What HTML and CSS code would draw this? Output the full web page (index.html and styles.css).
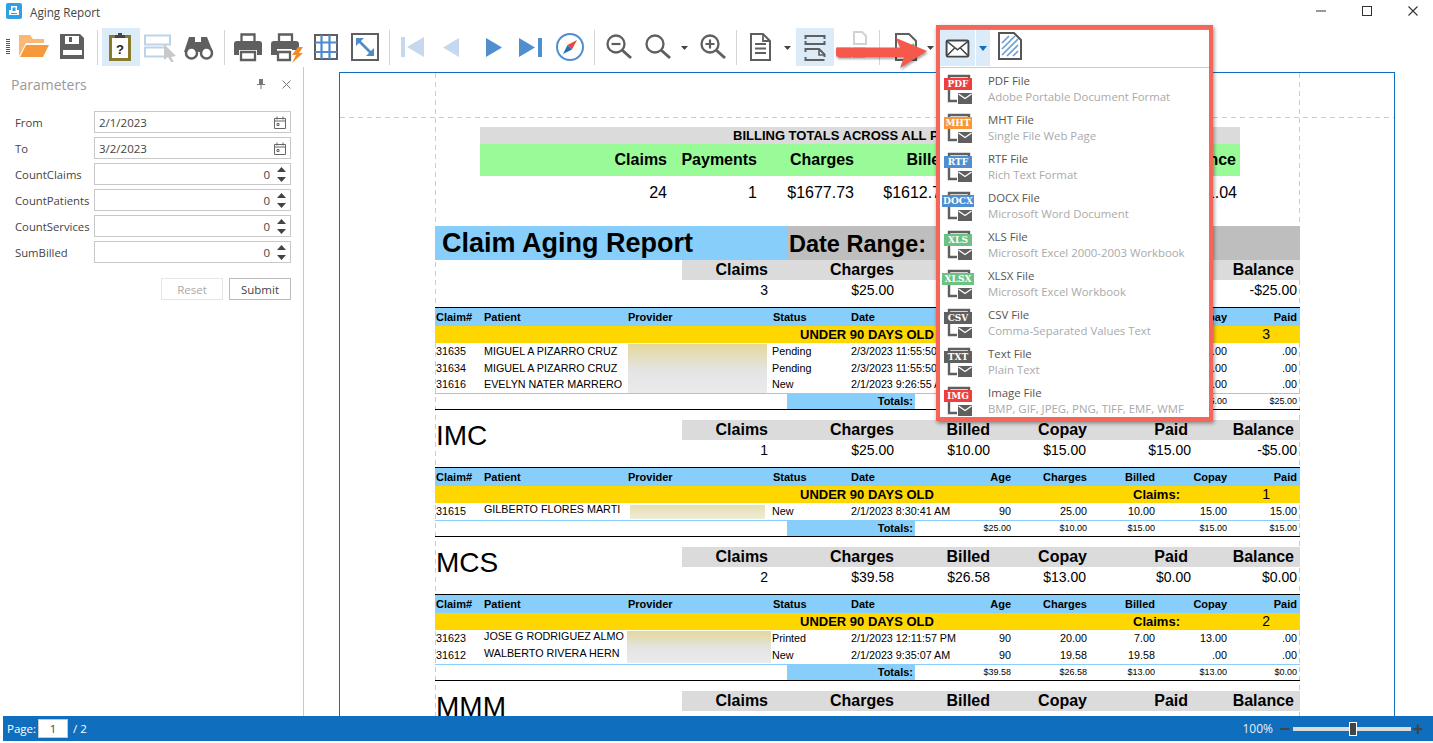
FILE: index.html
```html
<!DOCTYPE html>
<html lang="en">
<head>
<meta charset="utf-8">
<title>Aging Report</title>
<link rel="stylesheet" href="styles.css">
</head>
<body>
<svg class="defs" width="0" height="0" aria-hidden="true">
  <symbol id="filemail" viewBox="0 0 30 30">
    <path d="M5 6V2h20v5M5 14v13h8" fill="none" stroke="#5f5f5f" stroke-width="2.4"/>
    <rect x="14" y="19" width="14" height="11" fill="#5f5f5f"/>
    <path d="M14.5 20l6.5 4.5 6.5-4.5" fill="none" stroke="#fff" stroke-width="1.3"/>
  </symbol>
</svg>
<div class="app">
  <header class="titlebar">
    <svg class="appicon" width="16" height="16" viewBox="0 0 16 16"><rect width="16" height="16" rx="2" fill="#2f9fe8"/><path d="M5 3h6v4h2v5H3V7h2z" fill="#fff"/><path d="M6.5 4.5h3V8h-3zM5 10h6v1H5z" fill="#2f9fe8"/></svg>
    <span class="apptitle">Aging Report</span>
    <div class="winctrls">
      <svg width="12" height="12" viewBox="0 0 12 12"><path d="M1 6h10" stroke="#333" stroke-width="1"/></svg>
      <svg width="12" height="12" viewBox="0 0 12 12"><rect x="1.5" y="1.5" width="9" height="9" fill="none" stroke="#333"/></svg>
      <svg width="12" height="12" viewBox="0 0 12 12"><path d="M1.5 1.5l9 9M10.5 1.5l-9 9" stroke="#333" stroke-width="1.1"/></svg>
    </div>
  </header>

  <nav class="toolbar">
    <div class="grip"></div>
    <div class="tb"><svg viewBox="0 0 38 38"><path d="M4 28V7h11l3 4h11v4H11L4 28z" fill="#fab775"/><path d="M11 17h23l-6 12H5z" fill="#f7993b"/></svg></div>
    <div class="tb"><svg viewBox="0 0 38 38"><path d="M6 6h20l4 4v21H6z" fill="#5f5f5f"/><rect x="11" y="8" width="14" height="8" fill="#fff"/><rect x="15" y="9" width="3" height="5" fill="#5f5f5f"/><rect x="9" y="22" width="19" height="5" fill="#fff"/></svg></div>
    <div class="sep"></div>
    <div class="tb on"><svg viewBox="0 0 38 38"><rect x="7" y="7" width="22" height="26" fill="#8a7b2c"/><rect x="10" y="10" width="16" height="20" fill="#fff"/><path d="M13 10V7h3V5h4v2h3v3z" fill="#444"/><text class="q" x="18" y="26" text-anchor="middle">?</text></svg></div>
    <div class="tb"><svg viewBox="0 0 38 38"><path d="M4 7.500h25v9H4zM4 19.500h20v9H4z" fill="none" stroke="#bcd3ea" stroke-width="2"/><path d="M23 16l12 12-5 1 3 5-3 0-3-5-4 3z" fill="#c9c9c9"/></svg></div>
    <div class="tb"><svg viewBox="0 0 38 38"><path d="M9 9h6v5h6V9h6l6 15H4z" fill="#5f5f5f"/><circle cx="11.500" cy="25" r="5.500" fill="#fff" stroke="#5f5f5f" stroke-width="2.500"/><circle cx="26.500" cy="25" r="5.500" fill="#fff" stroke="#5f5f5f" stroke-width="2.500"/></svg></div>
    <div class="sep wide"></div>
    <div class="tb"><svg viewBox="0 0 38 38"><path d="M12.500 14V6.500h13V14" fill="none" stroke="#5f5f5f" stroke-width="2.300"/><path d="M8 13h22a3 3 0 0 1 3 3v11h-5v-5H10v5H5V16a3 3 0 0 1 3-3z" fill="#5f5f5f"/><path d="M12 24h14v8H12z" fill="#fff" stroke="#5f5f5f" stroke-width="2.300"/></svg></div>
    <div class="tb"><svg viewBox="0 0 38 38"><path d="M11 14V6.500h13V14" fill="none" stroke="#5f5f5f" stroke-width="2.300"/><path d="M6 13h22a3 3 0 0 1 3 3v6h-7v-1H9v6H3V16a3 3 0 0 1 3-3z" fill="#5f5f5f"/><path d="M10 24h12v8H10z" fill="#fff" stroke="#5f5f5f" stroke-width="2.300"/><path d="M30 19h5l-4 6h4l-11 10 4-8h-4z" fill="#f08a24"/></svg></div>
    <div class="tb"><svg viewBox="0 0 38 38"><rect x="8" y="7" width="22" height="24" fill="#fff" stroke="#5f5f5f" stroke-width="2"/><path d="M14.500 7v24M22.500 7v24M8 14.500h22M8 24h22" stroke="#4f8bc9" stroke-width="2.200"/></svg></div>
    <div class="tb"><svg viewBox="0 0 38 38"><rect x="6" y="6" width="26" height="26" fill="#fff" stroke="#5f5f5f" stroke-width="2"/><path d="M11 11l16 16" stroke="#4f8bc9" stroke-width="2.600"/><path d="M10 10h8l-8 8zM28 28h-8l8-8z" fill="#4f8bc9"/></svg></div>
    <div class="sep"></div>
    <div class="tb"><svg viewBox="0 0 38 38"><path d="M7 9h4v20H7zM30 9v20L13 19z" fill="#c5d8ee"/></svg></div>
    <div class="tb"><svg viewBox="0 0 38 38"><path d="M26 10v19L10 19.500z" fill="#c5d8ee"/></svg></div>
    <div class="tb"><svg viewBox="0 0 38 38"><path d="M14 10v19l16-9.500z" fill="#4f8fd1"/></svg></div>
    <div class="tb"><svg viewBox="0 0 38 38"><path d="M8 10v19l16-9.500zM27 10h4v19h-4z" fill="#4f8fd1"/></svg></div>
    <div class="tb"><svg viewBox="0 0 38 38"><circle cx="20" cy="19" r="13" fill="#fff" stroke="#4f8fd1" stroke-width="2"/><path d="M27 12l-9.500 5 4.500 4.500z" fill="#e8483f"/><path d="M13 26l4.500-9 4.500 4.500z" fill="#2d6db3"/></svg></div>
    <div class="sep wide"></div>
    <div class="tb"><svg viewBox="0 0 38 38"><circle cx="17" cy="16" r="8.500" fill="none" stroke="#5f5f5f" stroke-width="2.300"/><path d="M23 22l9 8" stroke="#5f5f5f" stroke-width="3"/><path d="M12.500 16h9" stroke="#5f5f5f" stroke-width="2.200"/></svg></div>
    <div class="tb arrowed"><svg viewBox="0 0 54 38"><circle cx="17" cy="16" r="8.500" fill="none" stroke="#5f5f5f" stroke-width="2.300"/><path d="M23 22l9 8" stroke="#5f5f5f" stroke-width="3"/><path d="M43 18h7l-3.500 4z" fill="#444"/></svg></div>
    <div class="tb"><svg viewBox="0 0 38 38"><circle cx="17" cy="16" r="8.500" fill="none" stroke="#5f5f5f" stroke-width="2.300"/><path d="M23 22l9 8" stroke="#5f5f5f" stroke-width="3"/><path d="M12.500 16h9M17 11.500v9" stroke="#5f5f5f" stroke-width="2.200"/></svg></div>
    <div class="sep"></div>
    <div class="tb arrowed"><svg viewBox="0 0 54 38"><path d="M10 6h12l7 7v19H10z" fill="#fff" stroke="#5f5f5f" stroke-width="2"/><path d="M22 6v7h7M14 16h11M14 20.500h11M14 25h11" fill="none" stroke="#5f5f5f" stroke-width="1.800"/><path d="M43 18h7l-3.500 4z" fill="#444"/></svg></div>
    <div class="tb on"><svg viewBox="0 0 38 38"><path d="M9.500 11V8h19v3M9.500 13v3h19v-3" fill="none" stroke="#5f5f5f" stroke-width="2"/><path d="M9.500 24v-3H23l5.500 5.500V29M9.500 29v3h19" fill="none" stroke="#5f5f5f" stroke-width="2"/><path d="M23 21v6h6" fill="none" stroke="#5f5f5f" stroke-width="1.600"/></svg></div>
    <div class="tb"><svg viewBox="0 0 38 38"><path d="M19 4h8l4 4v8H19z" fill="#fff" stroke="#d2d2d2" stroke-width="2"/><path d="M5 20h10v9H5zM19 20h10v9H19z" fill="none" stroke="#d8d8d8" stroke-width="2"/></svg></div>
    <div class="sep wide"></div>
    <div class="tb arrowed short"><svg viewBox="0 0 53 38"><path d="M12 6h13l7 7v19H12z" fill="#fff" stroke="#5f5f5f" stroke-width="2"/><path d="M16 20l6 5 8-9" fill="none" stroke="#6cbf78" stroke-width="2.500"/><path d="M43 18h7l-3.500 4z" fill="#444"/></svg></div>
  </nav>

  <main class="main">
    <aside class="panel">
      <div class="panelhead">
        <span class="paneltitle">Parameters</span>
        <svg class="pin" width="8" height="10" viewBox="0 0 8 10"><path d="M2 0h4v5h2v1H4.500v4h-1V6H0V5h2z" fill="#777"/></svg>
        <svg width="9" height="9" viewBox="0 0 9 9"><path d="M.5.500l8 8M8.500.500l-8 8" stroke="#777" stroke-width="1"/></svg>
      </div>
      <form class="params">
        <label class="plabel">From</label>
        <div class="field"><span>2/1/2023</span><svg class="cal" width="12" height="13" viewBox="0 0 12 13"><path d="M.5 2.500h11v10H.5zM.5 5h11M3 .500v3M9 .500v3M3 7.500h2v2H3z" fill="none" stroke="#666" stroke-width="1"/></svg></div>
        <label class="plabel">To</label>
        <div class="field"><span>3/2/2023</span><svg class="cal" width="12" height="13" viewBox="0 0 12 13"><path d="M.5 2.500h11v10H.5zM.5 5h11M3 .500v3M9 .500v3M3 7.500h2v2H3z" fill="none" stroke="#666" stroke-width="1"/></svg></div>
        <label class="plabel">CountClaims</label>
        <div class="field num"><span>0</span><svg class="spin" width="9" height="15" viewBox="0 0 9 15"><path d="M4.500 0L9 5H0zM0 10h9l-4.500 5z" fill="#444"/></svg></div>
        <label class="plabel">CountPatients</label>
        <div class="field num"><span>0</span><svg class="spin" width="9" height="15" viewBox="0 0 9 15"><path d="M4.500 0L9 5H0zM0 10h9l-4.500 5z" fill="#444"/></svg></div>
        <label class="plabel">CountServices</label>
        <div class="field num"><span>0</span><svg class="spin" width="9" height="15" viewBox="0 0 9 15"><path d="M4.500 0L9 5H0zM0 10h9l-4.500 5z" fill="#444"/></svg></div>
        <label class="plabel">SumBilled</label>
        <div class="field num"><span>0</span><svg class="spin" width="9" height="15" viewBox="0 0 9 15"><path d="M4.500 0L9 5H0zM0 10h9l-4.500 5z" fill="#444"/></svg></div>
      </form>
      <div class="panelbtns">
        <button class="btn off" type="button">Reset</button>
        <button class="btn" type="button">Submit</button>
      </div>
    </aside>

    <section class="viewport">
      <div class="corner"></div>
      <div class="page">
        <div class="sheet">
          <div class="grand">
            <div class="grandtitle">BILLING TOTALS ACROSS ALL PAYERS</div>
            <div class="grandrow grandhead"><b>Claims</b><b>Payments</b><b>Charges</b><b>Billed</b><b>Copay</b><b>Paid</b><b>Balance</b></div>
            <div class="grandrow grandvals"><span>24</span><span>1</span><span>$1677.73</span><span>$1612.73</span><span>$65.00</span><span>$16.00</span><span>$1531.04</span></div>
          </div>
          <div class="banner"><h1>Claim Aging Report</h1><div class="range">Date Range:</div></div>

          <div class="summary">
            <div class="payer"></div>
            <div class="sumhead"><b>Claims</b><b>Charges</b><b>Billed</b><b>Copay</b><b>Paid</b><b>Balance</b></div>
            <div class="sumvals"><span>3</span><span>$25.00</span><span>$0.00</span><span>$25.00</span><span>$25.00</span><span>-$25.00</span></div>
          </div>
          <div class="claims">
            <div class="chead"><span>Claim#</span><span>Patient</span><span>Provider</span><span class="st">Status</span><span>Date</span><span class="r">Age</span><span class="r">Charges</span><span class="r">Billed</span><span class="r">Copay</span><span class="r">Paid</span></div>
            <div class="cband"><b>UNDER 90 DAYS OLD</b><b>Claims:</b><span>3</span></div>
            <div class="crows three">
              <div class="blur tall s1"></div>
              <span>31635</span><span>MIGUEL A PIZARRO CRUZ</span><span>Pending</span><span>2/3/2023 11:55:50 AM</span><span class="r">90</span><span class="r">.00</span><span class="r">.00</span><span class="r">.00</span><span class="r">.00</span>
              <span>31634</span><span>MIGUEL A PIZARRO CRUZ</span><span>Pending</span><span>2/3/2023 11:55:50 AM</span><span class="r">90</span><span class="r">.00</span><span class="r">.00</span><span class="r">.00</span><span class="r">.00</span>
              <span>31616</span><span>EVELYN NATER MARRERO</span><span>New</span><span>2/1/2023 9:26:55 AM</span><span class="r">90</span><span class="r">25.00</span><span class="r">.00</span><span class="r">25.00</span><span class="r">.00</span>
            </div>
            <div class="ctotal"><i></i><b>Totals:</b><span>$25.00</span><span>$0.00</span><span>$25.00</span><span>$25.00</span><span>$25.00</span></div>
          </div>

          <div class="summary spaced">
            <div class="payer">IMC</div>
            <div class="sumhead"><b>Claims</b><b>Charges</b><b>Billed</b><b>Copay</b><b>Paid</b><b>Balance</b></div>
            <div class="sumvals"><span>1</span><span>$25.00</span><span>$10.00</span><span>$15.00</span><span>$15.00</span><span>-$5.00</span></div>
          </div>
          <div class="claims">
            <div class="chead"><span>Claim#</span><span>Patient</span><span>Provider</span><span class="st">Status</span><span>Date</span><span class="r">Age</span><span class="r">Charges</span><span class="r">Billed</span><span class="r">Copay</span><span class="r">Paid</span></div>
            <div class="cband"><b>UNDER 90 DAYS OLD</b><b>Claims:</b><span>1</span></div>
            <div class="crows">
              <div class="blur one s2"></div>
              <span>31615</span><span class="up">GILBERTO FLORES MARTI</span><span>New</span><span>2/1/2023 8:30:41 AM</span><span class="r">90</span><span class="r">25.00</span><span class="r">10.00</span><span class="r">15.00</span><span class="r">15.00</span>
            </div>
            <div class="ctotal"><i></i><b>Totals:</b><span>$25.00</span><span>$10.00</span><span>$15.00</span><span>$15.00</span><span>$15.00</span></div>
          </div>

          <div class="summary spaced">
            <div class="payer">MCS</div>
            <div class="sumhead"><b>Claims</b><b>Charges</b><b>Billed</b><b>Copay</b><b>Paid</b><b>Balance</b></div>
            <div class="sumvals"><span>2</span><span>$39.58</span><span>$26.58</span><span>$13.00</span><span>$0.00</span><span>$0.00</span></div>
          </div>
          <div class="claims">
            <div class="chead"><span>Claim#</span><span>Patient</span><span>Provider</span><span class="st">Status</span><span>Date</span><span class="r">Age</span><span class="r">Charges</span><span class="r">Billed</span><span class="r">Copay</span><span class="r">Paid</span></div>
            <div class="cband"><b>UNDER 90 DAYS OLD</b><b>Claims:</b><span>2</span></div>
            <div class="crows">
              <div class="blur two s3"></div>
              <span>31623</span><span class="up">JOSE G RODRIGUEZ ALMO</span><span>Printed</span><span>2/1/2023 12:11:57 PM</span><span class="r">90</span><span class="r">20.00</span><span class="r">7.00</span><span class="r">13.00</span><span class="r">.00</span>
              <span>31612</span><span class="up">WALBERTO RIVERA HERN</span><span>New</span><span>2/1/2023 9:35:07 AM</span><span class="r">90</span><span class="r">19.58</span><span class="r">19.58</span><span class="r">.00</span><span class="r">.00</span>
            </div>
            <div class="ctotal"><i></i><b>Totals:</b><span>$39.58</span><span>$26.58</span><span>$13.00</span><span>$13.00</span><span>$0.00</span></div>
          </div>

          <div class="summary spaced">
            <div class="payer">MMM</div>
            <div class="sumhead"><b>Claims</b><b>Charges</b><b>Billed</b><b>Copay</b><b>Paid</b><b>Balance</b></div>
          </div>
        </div>
      </div>
    </section>
  </main>

  <footer class="status">
    <span>Page:</span><span class="pagebox">1</span><span>/ 2</span>
    <span class="zoomval">100%</span>
    <span class="zoomsign">−</span>
    <div class="slider"><div class="thumb"></div></div>
    <span class="zoomsign">+</span>
  </footer>

  <div class="menu">
    <div class="menutools">
      <div class="mtool"><svg width="25" height="19" viewBox="0 0 26 20"><rect x="1.500" y="1.500" width="23" height="17" rx="1.500" fill="#fff" stroke="#444" stroke-width="2"/><path d="M2 2.500l11 9 11-9M2 17.500l8-8M24 17.500l-8-8" fill="none" stroke="#444" stroke-width="1.500"/></svg></div>
      <div class="mdrop"><svg width="8" height="5" viewBox="0 0 8 5"><path d="M0 0h8L4 5z" fill="#106ebe"/></svg></div>
      <svg class="hatch" width="24" height="28" viewBox="0 0 24 28"><path d="M1 1h15l7 7v19H1z" fill="#fff" stroke="#555" stroke-width="2"/><path d="M4 11l7-7M4 17l13-13M4 23l16-16M9 24l11-11M15 24l5-5" stroke="#6b9fd8" stroke-width="1.700"/></svg>
    </div>
    <ul class="mlist">
      <li><div class="fi"><svg width="30" height="30"><use href="#filemail"/></svg><span class="tag red">PDF</span></div><div class="ml"><div class="mt">PDF File</div><div class="ms">Adobe Portable Document Format</div></div></li>
      <li><div class="fi"><svg width="30" height="30"><use href="#filemail"/></svg><span class="tag orange">MHT</span></div><div class="ml"><div class="mt">MHT File</div><div class="ms">Single File Web Page</div></div></li>
      <li><div class="fi"><svg width="30" height="30"><use href="#filemail"/></svg><span class="tag blue">RTF</span></div><div class="ml"><div class="mt">RTF File</div><div class="ms">Rich Text Format</div></div></li>
      <li><div class="fi"><svg width="30" height="30"><use href="#filemail"/></svg><span class="tag blue wide">DOCX</span></div><div class="ml"><div class="mt">DOCX File</div><div class="ms">Microsoft Word Document</div></div></li>
      <li><div class="fi"><svg width="30" height="30"><use href="#filemail"/></svg><span class="tag green">XLS</span></div><div class="ml"><div class="mt">XLS File</div><div class="ms">Microsoft Excel 2000-2003 Workbook</div></div></li>
      <li><div class="fi"><svg width="30" height="30"><use href="#filemail"/></svg><span class="tag green wide">XLSX</span></div><div class="ml"><div class="mt">XLSX File</div><div class="ms">Microsoft Excel Workbook</div></div></li>
      <li><div class="fi"><svg width="30" height="30"><use href="#filemail"/></svg><span class="tag gray">CSV</span></div><div class="ml"><div class="mt">CSV File</div><div class="ms">Comma-Separated Values Text</div></div></li>
      <li><div class="fi"><svg width="30" height="30"><use href="#filemail"/></svg><span class="tag gray">TXT</span></div><div class="ml"><div class="mt">Text File</div><div class="ms">Plain Text</div></div></li>
      <li><div class="fi"><svg width="30" height="30"><use href="#filemail"/></svg><span class="tag red">IMG</span></div><div class="ml"><div class="mt">Image File</div><div class="ms">BMP, GIF, JPEG, PNG, TIFF, EMF, WMF</div></div></li>
    </ul>
  </div>
  <svg class="callout" width="100" height="34" viewBox="0 0 100 34"><path d="M3 10.500h62L61 1l31 13-27 17 4-11H3a2 2 0 0 1-2-2v-6a2 2 0 0 1 2-2z" fill="#f4594c"/></svg>
</div>
</body>
</html>
```
FILE: styles.css
```css
* { box-sizing: border-box; }
html, body { margin: 0; padding: 0; background: #fff; }
body { width: 1433px; height: 743px; overflow: hidden; font-family: "Open Sans", "Liberation Sans", sans-serif; color: #444; }
.defs { position: absolute; }
.app { position: relative; width: 1433px; height: 743px; display: flex; flex-direction: column; overflow: hidden; }

/* title bar */
.titlebar { height: 25px; flex: none; display: flex; align-items: center; padding-left: 6px; }
.appicon { margin-top: -3px; }
.apptitle { margin: -2px 0 0 8px; font-size: 11.700px; color: #444; }
.winctrls { margin-left: auto; display: flex; gap: 34px; padding-right: 14px; margin-top: -4px; }

/* toolbar */
.toolbar { height: 42px; flex: none; display: flex; padding: 3px 0 1px 5px; }
.grip { width: 4px; height: 15px; margin: 11px 5px 0 1px; flex: none; background: repeating-linear-gradient(#555 0 1px, transparent 1px 2px); }
.tb { width: 38px; height: 38px; margin-right: 1px; flex: none; }
.tb svg { display: block; width: 100%; height: 100%; }
.tb.on { background: #dcebf8; }
.tb.arrowed { width: 54px; }
.tb.short { width: 53px; }
.sep { width: 9px; flex: none; display: flex; justify-content: center; padding: 2px 0 1px; }
.sep::before { content: ""; width: 1px; background: #d4d4d4; }
.sep.wide { width: 10px; }
.q { font: bold 13px "Liberation Sans", sans-serif; fill: #222; }

/* main */
.main { flex: 1; min-height: 0; display: flex; }
.panel { width: 304px; flex: none; border-right: 1px solid #c8c8c8; padding: 6px 12px 0 0; }
.panelhead { display: flex; align-items: center; height: 22px; padding-left: 11px; }
.paneltitle { font-size: 14px; color: #999; margin-right: auto; }
.pin { margin-right: 17px; }
.params { display: grid; grid-template-columns: 79px 197px; grid-auto-rows: 22px; row-gap: 4px; margin: 16px 0 0 15px; }
.plabel { font-size: 11.300px; line-height: 23px; color: #444; white-space: nowrap; }
.field { border: 1px solid #c8c8c8; display: flex; align-items: center; padding: 0 4px; font-size: 11.500px; color: #444; }
.field span { flex: 1; }
.field.num span { text-align: right; padding-right: 7px; }
.panelbtns { display: flex; justify-content: flex-end; gap: 6px; margin: 15px 0 0; }
.btn { width: 62px; height: 22px; padding: 0; background: #fff; border: 1px solid #bbb; font: 11.500px "Open Sans", sans-serif; color: #444; }
.btn.off { border-color: #e6e6e6; color: #aaa; }

/* report */
.viewport { flex: 1; min-width: 0; position: relative; overflow: hidden; padding: 5px 0 0 35px; }
.corner { position: absolute; right: 6px; top: -9px; width: 0; height: 0; border-left: 6px solid transparent; border-bottom: 6px solid #444; }
.page { position: relative; width: 1056px; height: 700px; border: 1px solid #106ebe; border-bottom: 0; background: #fff; font-family: "Liberation Sans", Arial, sans-serif; color: #000; }
.page::before { content: ""; position: absolute; left: 0; right: 0; top: 44px; height: 1px; background: repeating-linear-gradient(90deg, #ccc 0 5px, transparent 5px 9px); }
.sheet { position: relative; isolation: isolate; margin-left: 95px; width: 865px; padding-top: 54px; height: 100%; }
.sheet::before { content: ""; position: absolute; z-index: -1; inset: 0; background: repeating-linear-gradient(#ccc 0 5px, transparent 5px 9px) left top / 1px 100% no-repeat, repeating-linear-gradient(#ccc 0 5px, transparent 5px 9px) right top / 1px 100% no-repeat; }

.grand { margin-left: 45px; width: 760px; }
.grandtitle { height: 17px; background: #dbdbdb; font: bold 13px/17px "Liberation Sans", sans-serif; padding-left: 253px; white-space: nowrap; }
.grandrow { display: grid; grid-template-columns: 187px 90px 97px 96px 105px 90px 92px; padding-right: 3px; }
.grandrow > * { text-align: right; }
.grandhead { height: 32px; background: #98fb98; font-size: 16px; line-height: 31px; }
.grandhead b:last-child { padding-right: 1px; }
.grandvals { height: 32px; font-size: 16px; line-height: 33px; }

.banner { display: flex; height: 34px; margin-top: 18px; }
.banner h1 { width: 352px; margin: 0; background: #87cefa; font-size: 27px; line-height: 34px; padding-left: 7px; font-weight: bold; }
.range { flex: 1; background: #bebebe; font-size: 23.500px; font-weight: bold; line-height: 36px; padding-left: 2px; }

.summary { display: grid; grid-template-columns: 247px 618px; grid-template-rows: 20px 20px; height: 47px; }
.summary.spaced { margin-top: 10px; }
.payer { grid-row: 1 / 3; font-size: 28px; line-height: 32px; padding-left: 1px; }
.sumhead { display: grid; grid-template-columns: 86px 126px 96px 97px 101px 106px; background: #dbdbdb; font-size: 16px; line-height: 19px; }
.sumvals { display: grid; grid-template-columns: 86px 126px 96px 96px 105px 106px; font-size: 14px; line-height: 20px; }
.sumhead > *, .sumvals > * { text-align: right; }

.claims { border-top: 1px solid #000; border-bottom: 1px solid #000; }
.chead, .crows { display: grid; grid-template-columns: 49px 144px 144px 79px 124px 36px 76px 68px 72px 70px; }
.chead { height: 18px; background: #87cefa; font-size: 11px; font-weight: bold; line-height: 19px; white-space: nowrap; }
.chead span { padding-left: 1px; }
.chead span:nth-child(2), .chead span:nth-child(3), .chead span:nth-child(5) { padding-left: 0; }
.chead .r { padding-left: 0; }
.r { text-align: right; }
.cband { display: grid; grid-template-columns: 333px 70px 67px; padding-left: 365px; height: 17px; background: #ffd700; font-size: 13px; line-height: 17px; }
.cband span { text-align: right; font-size: 14px; }
.crows { grid-auto-rows: 17px; font-size: 10.750px; line-height: 16px; white-space: nowrap; border-bottom: 1px solid #87cefa; }
.crows.three { grid-auto-rows: 16.667px; height: 51px; }
.crows > span:nth-of-type(9n+1) { padding-left: 1px; }
.up { line-height: 13px; }
.blur { grid-column: 3; background: linear-gradient(#e3d99b, #e4e4e4 55%, #ebebeb); }
.tall { grid-row: 1 / span 3; margin: 1px 5px 0 0; }
.one { grid-row: 1; margin: 2px 7px 1px 2px; background: linear-gradient(#e6dfae, #efecd9); }
.two { grid-row: 1 / span 2; margin: 1px 1px 1px -1px; }
.ctotal { display: grid; grid-template-columns: 352px 128px 96px 76px 68px 72px 70px; height: 15px; font-size: 9px; line-height: 15px; }
.ctotal span { text-align: right; }
.ctotal b { background: #87cefa; font-size: 11px; text-align: right; padding-right: 2px; }

/* status bar */
.status { flex: none; height: 25px; margin: 0 0 2px 3px; background: #106ebe; color: #fff; display: flex; align-items: center; font-size: 11.500px; padding: 0 9px 0 4px; }
.pagebox { width: 30px; height: 19px; margin: 0 5px 0 2px; background: #fff; border: 1px solid #c8c8c8; color: #444; text-align: center; line-height: 17px; }
.zoomval { margin-left: auto; margin-right: 6px; font-size: 12px; color: #e8f0f8; }
.zoomsign { color: #444; font: bold 18px/18px "Liberation Sans", sans-serif; width: 12px; text-align: center; }
.slider { position: relative; width: 118px; height: 4px; margin: 0 1px 0 2px; background: #dcdcdc; }
.thumb { position: absolute; left: 56px; top: -5px; width: 8px; height: 14px; background: #444; border: 1px solid #fff; }

/* export dropdown */
.menu { position: absolute; left: 936px; top: 25px; width: 277px; height: 396px; background: #fff; border: 4px solid #f4655a; box-shadow: 1px 2px 4px rgba(0,0,0,.45); display: flex; flex-direction: column; overflow: hidden; }
.menutools { height: 39px; flex: none; display: flex; align-items: flex-start; border-top: 1px solid #999; border-bottom: 1px solid #ccc; }
.mtool { width: 35px; height: 36px; background: #dcebf8; display: flex; align-items: center; justify-content: center; }
.mdrop { width: 14px; height: 36px; margin-left: 1px; background: #dcebf8; display: flex; align-items: center; justify-content: center; }
.hatch { margin: 2px 0 0 8px; }
.mlist { list-style: none; margin: 0; padding: 0; }
.mlist li { height: 39px; display: flex; padding: 6px 0 0 4px; }
.fi { position: relative; width: 30px; height: 30px; flex: none; }
.fi svg { display: block; }
.tag { position: absolute; left: 0; top: 4px; width: 28px; height: 12px; color: #fff; font: bold 9px/12px "DejaVu Serif", serif; text-align: center; }
.tag.wide { left: -2px; width: 32px; }
.red { background: #ee3e3e; }
.orange { background: #f7973a; }
.blue { background: #4f8fd1; }
.green { background: #6cc183; }
.gray { background: #5f5f5f; }
.ml { margin: -1px 0 0 14px; font-size: 11.400px; line-height: 16px; white-space: nowrap; }
.mt { color: #555; }
.ms { color: #aaa; }
.callout { position: absolute; left: 835px; top: 37px; filter: drop-shadow(1px 2px 1px rgba(0,0,0,.35)); }
```
